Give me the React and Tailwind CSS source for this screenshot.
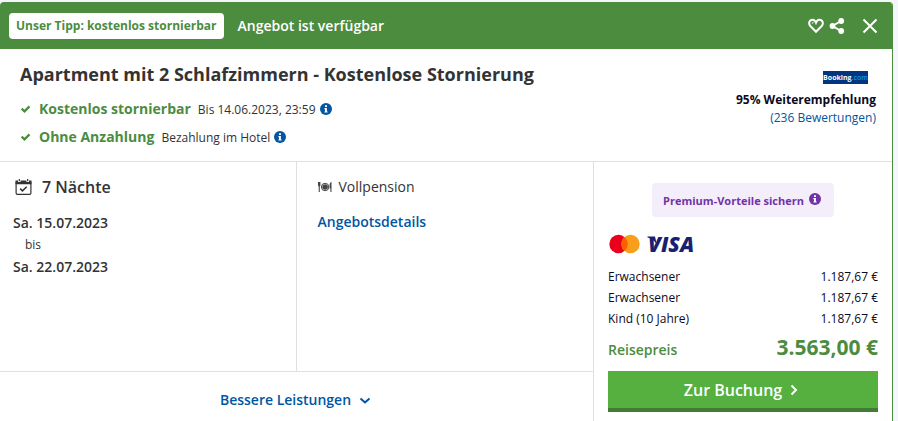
import { useState } from 'react';

const travellers = [
  { label: 'Erwachsener', price: '1.187,67 €' },
  { label: 'Erwachsener', price: '1.187,67 €' },
  { label: 'Kind (10 Jahre)', price: '1.187,67 €' },
];

function InfoIcon({ className }) {
  return (
    <svg viewBox="0 0 12 12" className={className} aria-hidden="true">
      <circle cx="6" cy="6" r="6" fill="currentColor" />
      <path d="M5 2.2h2v1.7H5zM4.4 5h2.5v3.4h.7v1.2H4.4V8.4H5V6.2h-.6z" fill="#fff" />
    </svg>
  );
}

function CheckIcon() {
  return (
    <svg viewBox="0 0 12 12" className="h-3 w-3 shrink-0" fill="none" stroke="currentColor" strokeWidth="2.2" aria-hidden="true">
      <path d="M1.6 5.6l2.900 2.800 5-5" />
    </svg>
  );
}

function HeartIcon() {
  return (
    <svg viewBox="0 0 16 16" className="h-4 w-4" fill="none" stroke="currentColor" strokeWidth="2" aria-hidden="true">
      <path d="M8 13.800L2.300 8C.400 5.800 1 2.900 3.200 2c1.900-.700 3.900.300 4.800 2.600C8.900 2.300 10.900 1.300 12.800 2c2.200.900 2.800 3.800.900 6z" />
      <path d="M4.300 5.700c0-1 .500-1.500 1.200-1.700" strokeWidth="1" />
    </svg>
  );
}

function ShareIcon() {
  return (
    <svg viewBox="0 0 16 16" className="h-4 w-4" fill="currentColor" aria-hidden="true">
      <path d="M12 3L3.500 8l8.500 5" fill="none" stroke="currentColor" strokeWidth="2" />
      <circle cx="12.200" cy="3" r="2.900" />
      <circle cx="3.500" cy="8" r="2.900" />
      <circle cx="12.200" cy="13" r="2.900" />
    </svg>
  );
}

function CloseIcon() {
  return (
    <svg viewBox="0 0 16 16" className="h-4 w-4" fill="none" stroke="currentColor" strokeWidth="2" aria-hidden="true">
      <path d="M1.500 1.500l13 13M14.500 1.500l-13 13" />
    </svg>
  );
}

function CalendarIcon() {
  return (
    <svg viewBox="0 0 17 17" className="h-[17px] w-[17px]" aria-hidden="true">
      <rect x="1.100" y="2.500" width="14.800" height="12.800" rx="1.300" fill="none" stroke="#333" strokeWidth="1.200" />
      <path d="M.500 1.500h16V5.300H.500z" fill="#333" />
      <path d="M3 0h2.600v3H3zM11.400 0H14v3h-2.600z" fill="#fff" />
      <path d="M3.700 0h1.200v2.200H3.700zM12.100 0h1.200v2.200h-1.200z" fill="#333" />
      <path d="M5.200 9.600l2.300 2.300 4.200-4.200" fill="none" stroke="#333" strokeWidth="1.500" />
    </svg>
  );
}

function MealIcon() {
  return (
    <svg viewBox="0 0 14 12" className="h-3 w-3.5" fill="#444" aria-hidden="true">
      <path d="M0 1h2.400v3.500l-.600.900V11H.700V5.400L0 4.500zM13.500 1v10h-1.100V7.500h-.800V4c0-1.600.800-2.800 1.900-3z" />
      <circle cx="7.100" cy="6" r="3.700" fill="none" stroke="#444" />
      <circle cx="7.100" cy="6" r="2.800" />
    </svg>
  );
}

function CardLogos() {
  return (
    <svg viewBox="0 -6 100 32" className="h-8 w-[100px]" role="img" aria-label="Mastercard, Visa">
      <circle cx="10.500" cy="10" r="9.200" fill="#eb001b" />
      <circle cx="22.500" cy="10" r="9.200" fill="#f79e1b" />
      <path d="M16.500 3a9.200 9.200 0 0 1 0 14a9.200 9.200 0 0 1 0-14z" fill="#ff5f00" />
      <path d="M39.500 2.500H47l2 9c-1.300-4-4.800-7-9.500-8z" fill="#1a1f71" />
      <text x="40" y="17.500" fill="#1a1f71" fontSize="21" fontWeight="800" fontStyle="italic">VISA</text>
    </svg>
  );
}

function Benefit({ title, note }) {
  return (
    <li className="flex h-7 items-center">
      <span className="text-[#4c8c3f]"><CheckIcon /></span>
      <p className="ml-[7px] flex items-baseline gap-[7px]">
        <span className="text-sm font-bold text-[#4c8c3f]">{title}</span>
        <span className="text-xs">{note}</span>
      </p>
      <button type="button" aria-label={`Info: ${title}`} className="mb-px ml-1 text-[#0056a3]">
        <InfoIcon className="h-3 w-3" />
      </button>
    </li>
  );
}

export default function App() {
  const [liked, setLiked] = useState(false);

  return (
    <div className="bg-[#f5f5fc] pr-[5px] pt-0.5 font-['Open_Sans',sans-serif] text-[#333]">
      <article className="overflow-hidden rounded-t border-r border-[#4c8c3f] bg-white">
        <header className="flex h-[47px] items-center bg-[#4c8c3f] pl-[9px] pr-3.5 text-white">
          <span className="rounded bg-white px-[7px] py-1 text-xs leading-[18px] font-bold text-[#4c8c3f]">
            Unser Tipp: kostenlos stornierbar
          </span>
          <span className="ml-3.5 text-sm font-semibold">Angebot ist verfügbar</span>
          <div className="ml-auto flex items-center">
            <button type="button" aria-label="Merken" aria-pressed={liked} onClick={() => setLiked(!liked)}>
              <HeartIcon />
            </button>
            <button type="button" aria-label="Teilen" className="ml-[5px]"><ShareIcon /></button>
            <button type="button" aria-label="Schließen" className="ml-[17px]"><CloseIcon /></button>
          </div>
        </header>

        <section className="flex h-[113px] justify-between border-b border-[#dee0e3] pl-5 pr-4">
          <div className="pt-3">
            <h2 className="text-lg leading-[26px] font-bold">Apartment mit 2 Schlafzimmern - Kostenlose Stornierung</h2>
            <ul className="mt-2">
              <Benefit title="Kostenlos stornierbar" note="Bis 14.06.2023, 23:59" />
              <Benefit title="Ohne Anzahlung" note="Bezahlung im Hotel" />
            </ul>
          </div>
          <div className="flex flex-col items-end pt-[22px] text-xs leading-[18px]">
            <span className="mr-2 mb-[7px] flex h-[13px] w-[45px] items-center justify-center bg-[#003580] text-[7px] font-bold text-white">
              Booking<span className="font-semibold text-[#0896e6]">.com</span>
            </span>
            <span className="font-bold text-[#0a0a23]">95% Weiterempfehlung</span>
            <a href="#bewertungen" className="text-[#0056a3]">(236 Bewertungen)</a>
          </div>
        </section>

        <div className="grid grid-cols-[1fr_299px]">
          <div className="flex flex-col">
            <div className="grid h-[210px] grid-cols-2 border-b border-[#dee0e3]">
              <section className="border-r border-[#dee0e3] pt-[13px] pl-[13px]">
                <h3 className="flex items-center gap-2.5 pl-0.5 text-base leading-6 font-semibold">
                  <CalendarIcon />
                  7 Nächte
                </h3>
                <div className="mt-[13px] text-sm leading-[22px] font-semibold">
                  <p>Sa. 15.07.2023</p>
                  <p className="pl-3 text-xs leading-[22px] font-normal">bis</p>
                  <p>Sa. 22.07.2023</p>
                </div>
              </section>
              <section className="pt-[13px] pl-[21px] text-sm leading-6">
                <p className="flex items-center gap-[7px]">
                  <MealIcon />
                  Vollpension
                </p>
                <a href="#details" className="mt-[11px] inline-block font-semibold text-[#0056a3]">Angebotsdetails</a>
              </section>
            </div>
            <button type="button" className="flex h-[55px] items-center justify-center gap-2 pr-0.5 text-sm font-semibold text-[#0056a3]">
              Bessere Leistungen
              <svg viewBox="0 0 12 12" className="h-3 w-3" fill="none" stroke="currentColor" strokeWidth="2" aria-hidden="true">
                <path d="M1.500 4.500L6 8.500l4.500-4" />
              </svg>
            </button>
          </div>

          <section className="border-l border-[#dee0e3] px-3.5 pt-[21px] pb-3 text-xs text-[#0a0a23]">
            <button type="button" className="mx-auto flex h-[34px] items-center gap-[5px] rounded bg-[#f4eefa] pt-0.5 pr-[13px] pl-[11px] text-[11px] font-bold text-[#7232a8]">
              Premium-Vorteile sichern
              <InfoIcon className="mb-1 h-3 w-3" />
            </button>
            <div className="mt-[11px] mb-1.5">
              <CardLogos />
            </div>
            <dl className="leading-[21px]">
              {travellers.map((traveller, index) => (
                <div key={index} className="flex justify-between">
                  <dt>{traveller.label}</dt>
                  <dd>{traveller.price}</dd>
                </div>
              ))}
              <div className="flex items-baseline justify-between text-[#4c8c3f]">
                <dt className="text-sm leading-9 font-semibold">Reisepreis</dt>
                <dd className="text-[21px] leading-9 font-bold">3.563,00 €</dd>
              </div>
            </dl>
            <button type="button" className="mt-[3px] flex h-[41px] w-full items-center justify-center gap-2 border-b-4 border-[#427a36] bg-[#55b040] pr-1 text-base font-semibold text-white">
              Zur Buchung
              <svg viewBox="0 0 8 12" className="h-3 w-2" fill="none" stroke="currentColor" strokeWidth="2" aria-hidden="true">
                <path d="M1.500 1.500L6 6l-4.500 4.500" />
              </svg>
            </button>
          </section>
        </div>
      </article>
    </div>
  );
}
